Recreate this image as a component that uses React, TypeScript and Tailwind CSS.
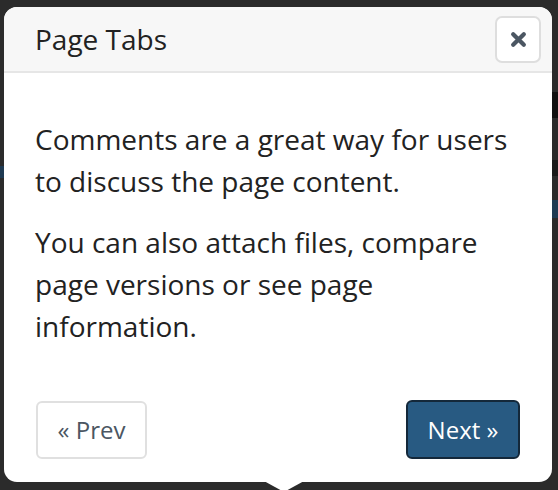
import React from 'react'

function CloseIcon() {
  return (
    <svg width="17" height="17" viewBox="0 0 16 16" aria-hidden="true">
      <path
        d="M3 3 L13 13 M13 3 L3 13"
        stroke="#4b5662"
        strokeWidth="4"
        strokeLinecap="round"
      />
    </svg>
  )
}

export default function App() {
  return (
    <div
      className="relative h-[490px] w-[558px] overflow-hidden bg-[#2b2b2b] pt-[7px] pl-[4px]"
      style={{ fontFamily: '"Open Sans", "Noto Sans", sans-serif' }}
    >
      {/* bits of the page behind the popover */}
      <div className="absolute right-0 top-[92px] h-[26px] w-[8px] bg-[#111]" />
      <div className="absolute right-0 top-[160px] h-[16px] w-[8px] bg-[#1a1a1a]" />
      <div className="absolute right-0 top-[200px] h-[18px] w-[8px] bg-[#1f3a52]" />
      <div className="absolute left-0 top-[166px] h-[12px] w-[6px] bg-[#1f3a52]" />

      <div className="relative flex h-[475px] w-[548px] flex-col rounded-[13px] bg-white">
        <div className="flex h-[66px] items-center justify-between rounded-t-[13px] border-b-2 border-[#e6e6e6] bg-[#f7f7f7] pl-[31px] pr-[11px]">
          <h3 className="text-[28px] leading-none text-[#222]">Page Tabs</h3>
          <button className="flex h-[47px] w-[46px] items-center justify-center rounded-[7px] border-2 border-[#dedede] bg-white">
            <CloseIcon />
          </button>
        </div>

        <div className="flex-1 px-[31px] pt-[45px] text-[28px] leading-[42px] text-[#222]">
          <p className="mb-[19px]">
            Comments are a great way for users to discuss the page content.
          </p>
          <p>
            You can also attach files, compare page versions or see page
            information.
          </p>
        </div>

        <div className="flex items-center justify-between px-[32px] pb-[23px]">
          <button className="h-[58px] w-[111px] rounded-[6px] border-2 border-[#e0e0e0] bg-white text-[24px] text-[#4b5662]">
            « Prev
          </button>
          <button className="h-[59px] w-[114px] rounded-[6px] border-2 border-[#14283a] bg-[#285a82] text-[24px] text-white">
            Next »
          </button>
        </div>

        <div className="absolute bottom-[-10px] left-[260px] h-0 w-0 border-x-[20px] border-t-[11px] border-x-transparent border-t-white" />
      </div>
    </div>
  )
}
